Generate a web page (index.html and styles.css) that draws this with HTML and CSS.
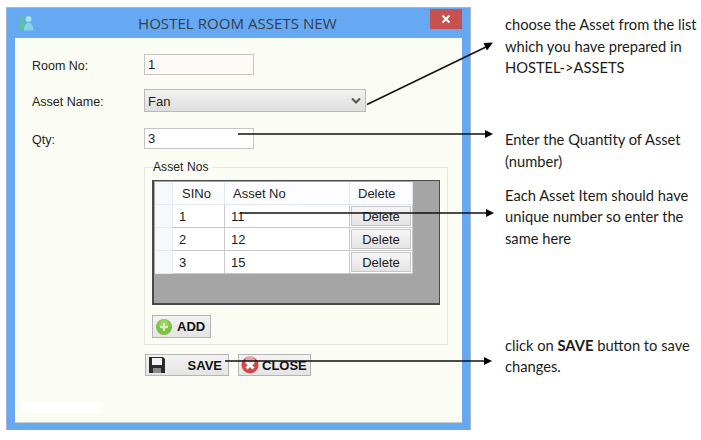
FILE: index.html
```html
<!DOCTYPE html>
<html lang="en">
<head>
<meta charset="utf-8">
<title>Hostel Room Assets New</title>
<link rel="stylesheet" href="styles.css">
</head>
<body>
<div class="page">
  <section class="window">
    <header class="titlebar">
      <svg class="app-icon" width="18" height="17" viewBox="0 0 18 17">
        <circle cx="4.500" cy="3.500" r="2.300" fill="#58c596"/>
        <path d="M1.500 14c0-4 .8-7 3-7s3.500 2 3.500 7z" fill="#58c596"/>
        <circle cx="11.500" cy="4" r="3" fill="#a6e2ee"/>
        <path d="M7 15.500c0-5 1.500-8 4.500-8s5 3 5 8z" fill="#86d3e6"/>
      </svg>
      <h1 class="title">HOSTEL ROOM ASSETS NEW</h1>
      <button class="close-x" type="button">
        <svg width="10" height="10" viewBox="0 0 10 10"><path d="M1.500 1.500l7 7M8.500 1.500l-7 7" stroke="#fff" stroke-width="2"/></svg>
      </button>
    </header>
    <div class="client">
      <div class="row row-room">
        <label class="label">Room No:</label>
        <div class="input input-room">1</div>
      </div>
      <div class="row row-asset">
        <label class="label">Asset Name:</label>
        <div class="combo">
          <span>Fan</span>
          <svg width="10" height="8" viewBox="0 0 10 8"><path d="M1 1.500l4 4 4-4" fill="none" stroke="#555" stroke-width="2"/></svg>
        </div>
      </div>
      <div class="row row-qty">
        <label class="label">Qty:</label>
        <div class="input">3</div>
      </div>
      <div class="group">
        <div class="legend">Asset Nos</div>
        <div class="grid-box">
          <div class="grid">
            <div class="cell corner"></div>
            <div class="cell head">SINo</div>
            <div class="cell head">Asset No</div>
            <div class="cell head">Delete</div>

            <div class="cell rowhead"></div>
            <div class="cell">1</div>
            <div class="cell">11</div>
            <div class="cell btn-cell"><span class="del">Delete</span></div>

            <div class="cell rowhead"></div>
            <div class="cell">2</div>
            <div class="cell">12</div>
            <div class="cell btn-cell"><span class="del">Delete</span></div>

            <div class="cell rowhead"></div>
            <div class="cell">3</div>
            <div class="cell">15</div>
            <div class="cell btn-cell"><span class="del">Delete</span></div>
          </div>
        </div>
        <button class="btn btn-add" type="button">
          <svg width="18" height="18" viewBox="0 0 18 18">
            <circle cx="9" cy="9" r="8" fill="#7fbf45"/>
            <circle cx="9" cy="6.500" r="5" fill="#a8d878" opacity=".7"/>
            <path d="M9 5v8M5 9h8" stroke="#d8efc0" stroke-width="2"/>
          </svg>
          ADD
        </button>
      </div>
      <div class="actions">
        <button class="btn btn-save" type="button">
          <svg width="18" height="18" viewBox="0 0 18 18">
            <path d="M1 1h14l2 2v14H1z" fill="#2a2a2a"/>
            <rect x="4" y="2" width="10" height="7" fill="#f2f2f2"/>
            <rect x="5" y="12" width="8" height="5" fill="#8a8a8a"/>
          </svg>
          <span>SAVE</span>
        </button>
        <button class="btn btn-close" type="button">
          <svg width="18" height="18" viewBox="0 0 18 18">
            <circle cx="9" cy="9" r="8.500" fill="#cf474a"/>
            <circle cx="9" cy="5" r="5" fill="#e9b9b9" opacity=".8"/>
            <path d="M5.500 5.500l7 7M12.500 5.500l-7 7" stroke="#fff" stroke-width="3"/>
          </svg>
          CLOSE
        </button>
      </div>
      <div class="patch"></div>
    </div>
  </section>
  <aside class="notes">
    <p class="note note-1">choose the Asset from the list<br>which you have prepared in<br>HOSTEL-&gt;ASSETS</p>
    <p class="note note-2">Enter the Quantity of Asset<br>(number)</p>
    <p class="note note-3">Each Asset Item should have<br>unique number so enter the<br>same here</p>
    <p class="note note-4">click on <b>SAVE</b> button to save<br>changes.</p>
  </aside>
  <svg class="arrows" width="701" height="440" viewBox="0 0 701 440">
    <g stroke="#111" stroke-width="1.500" fill="#000">
      <path d="M367 104.500L488 46" fill="none"/>
      <path d="M238 134H486" fill="none"/>
      <path d="M240 213H486" fill="none"/>
      <path d="M225 361H484" fill="none"/>
    </g>
    <g fill="#000">
      <path d="M493 42.500l-9.500 .5 3.500 7.500z"/>
      <path d="M493 134l-8-4v8z"/>
      <path d="M494 213l-8-4v8z"/>
      <path d="M492 361l-8-4v8z"/>
    </g>
  </svg>
</div>
</body>
</html>
```

FILE: styles.css
```css
* { box-sizing: border-box; }
html, body { margin: 0; padding: 0; background: #fff; }
.page {
  position: relative;
  display: flex;
  width: 701px;
  height: 440px;
  overflow: hidden;
  padding: 7px 0 0 6px;
  font-family: "Liberation Sans", Arial, sans-serif;
  color: #222;
}
.window {
  width: 465px;
  height: 423px;
  background: #66a8f2;
  border: 1px solid #a3b8d0;
  border-bottom: 0;
  display: flex;
  flex-direction: column;
  flex: none;
}
.titlebar {
  height: 30px;
  display: flex;
  align-items: flex-start;
  flex: none;
}
.app-icon { margin: 7px 0 0 10px; flex: none; }
.title {
  margin: 3px 0 0 103px;
  font: 400 15.100px/24px "Open Sans", sans-serif;
  color: #34404e;
  flex: 1;
  white-space: nowrap;
}
.close-x {
  width: 32px;
  height: 20px;
  margin: 1px 8px 0 0;
  padding: 0;
  border: 0;
  background: #c75050;
  display: flex;
  align-items: center;
  justify-content: center;
}
.client {
  position: relative;
  width: 447px;
  height: 385px;
  margin-left: 8px;
  background: #fbfcf4;
  padding: 16px 0 0 17px;
  border-bottom: 1px solid #c8ccc8;
}
.row { display: flex; align-items: center; }
.row-asset { margin-top: 14px; }
.row-qty { margin-top: 16px; }
.label { width: 112px; padding-top: 2px; font-size: 12.500px; flex: none; }
.input {
  width: 110px;
  height: 21px;
  background: #fff;
  border: 1px solid #c4c6c4;
  padding-left: 3px;
  font-size: 13px;
  line-height: 20px;
}
.input-room { background: #fff9f7; }
.combo {
  width: 222px;
  height: 23px;
  border: 1px solid #b8b8b8;
  background: linear-gradient(#f2f2f2, #dedede);
  display: flex;
  align-items: center;
  justify-content: space-between;
  padding: 1px 4px 0 3px;
  font-size: 13px;
}
.group {
  width: 304px;
  height: 178px;
  margin: 18px 0 0 112px;
  border: 1px solid #e6e7e0;
  padding: 0 0 0 7px;
}
.legend {
  width: max-content;
  margin: -7px 0 0 1px;
  padding: 0 3px 0 0;
  background: #fbfcf4;
  font-size: 12px;
  line-height: 13px;
  letter-spacing: .1px;
}
.grid-box {
  width: 288px;
  height: 125px;
  margin-top: 6px;
  background: #a5a5a5;
  border: 1px solid #4a4a4a;
  border-width: 1px 1px 2px 2px;
  padding: 1px 0 0 1px;
}
.grid {
  display: grid;
  grid-template-columns: 18px 52px 125px 63px;
  grid-auto-rows: 23px;
  width: 258px;
  font-size: 13px;
}
.cell {
  background: #fff;
  border-right: 1px solid #c9c9c9;
  border-bottom: 1px solid #c9c9c9;
  padding: 4px 0 0 6px;
  line-height: 16px;
}
.corner, .rowhead { background: #f6f8fc; border-color: #e3ebf5; }
.head { background: #fdfdff; border-color: #dfe8f3; padding-top: 4px; }
.cell.head:nth-child(2) { padding-left: 9px; }
.cell.head:nth-child(3) { padding-left: 8px; }
.cell.head:nth-child(4) { padding-left: 8px; }
.btn-cell { padding: 1px; }
.del {
  display: block;
  height: 20px;
  border: 1px solid #c6c6c6;
  background: linear-gradient(#f6f6f6, #e4e4e4);
  text-align: center;
  line-height: 19px;
}
.btn {
  display: flex;
  align-items: center;
  border: 1px solid #b4b4b4;
  background: linear-gradient(#f3f3f3, #e4e4e4);
  padding: 0 0 0 2px;
  font: 700 13px "Liberation Sans", sans-serif;
  color: #111;
}
.btn-add {
  width: 59px;
  height: 23px;
  margin-top: 10px;
  gap: 4px;
}
.actions {
  display: flex;
  gap: 9px;
  margin: 9px 0 0 113px;
}
.btn-save { width: 84px; height: 22px; justify-content: space-between; padding-right: 6px; }
.btn-close { width: 73px; height: 22px; gap: 3px; }
.patch {
  position: absolute;
  left: 7px;
  top: 364px;
  width: 81px;
  height: 11px;
  background: #fff;
}
.notes {
  flex: none;
  margin-left: 34px;
  padding-top: 7px;
  width: 195px;
  font: 400 14.700px/21.700px Lato, sans-serif;
  color: #1c1c1c;
  white-space: nowrap;
}
.note { margin: 0; }
.note-2 { margin-top: 50px; }
.note-3 { margin-top: 12px; }
.note-4 { margin-top: 85px; }
.arrows { position: absolute; left: 0; top: 0; pointer-events: none; }
```
